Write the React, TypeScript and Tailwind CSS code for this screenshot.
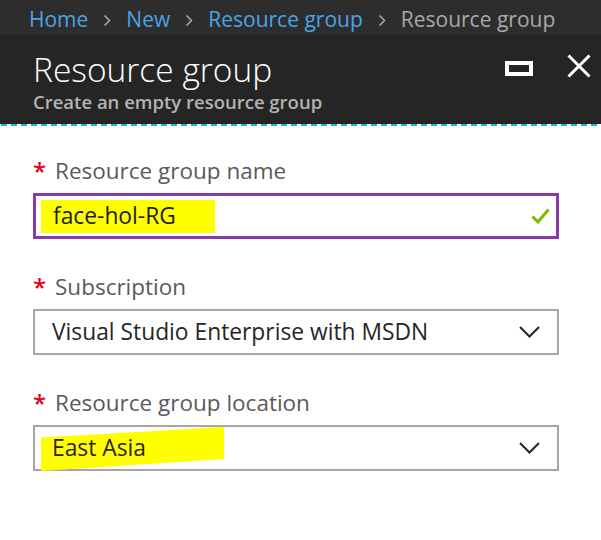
import React from 'react';

const crumbs = ['Home', 'New', 'Resource group'];

const Label: React.FC<{ text: string }> = ({ text }) => (
  <div className="flex items-center h-[28px] text-[22.5px] text-[#5a5a5a]">
    <span className="w-[22px] text-[24px] leading-none text-[#e3001b] font-semibold">*</span>
    <span>{text}</span>
  </div>
);

const Chevron = () => (
  <svg width="21" height="12" viewBox="0 0 21 12" fill="none">
    <path d="M1 1l9.5 9.5L20 1" stroke="#262626" strokeWidth="2" />
  </svg>
);

const Sep = () => (
  <svg width="8" height="13" viewBox="0 0 8 13" fill="none" className="mx-[15px] mt-[2px]">
    <path d="M1.5 1.5l5 5-5 5" stroke="#a8a8a8" strokeWidth="1.5" />
  </svg>
);

const App: React.FC = () => {
  return (
    <div className="w-[601px] h-[540px] bg-white overflow-hidden font-['Open_Sans','Noto_Sans',sans-serif]">
      {/* breadcrumb */}
      <nav className="h-[35px] bg-[#2d2d2d] flex items-center pl-[29px] pt-[3px] text-[21px] leading-none">
        {crumbs.map(c => (
          <React.Fragment key={c}>
            <span className="text-[#4ba3e8]">{c}</span>
            <Sep />
          </React.Fragment>
        ))}
        <span className="text-[#a8a8a8]">Resource group</span>
      </nav>

      {/* blade header */}
      <header className="h-[89px] bg-[#252525] flex justify-between pl-[33px] pr-[10px] pt-[14px]">
        <div>
          <h1 className="text-[33.5px] leading-[40px] font-light text-white">Resource group</h1>
          <p className="text-[18.5px] leading-[22px] font-semibold text-[#b3b3b3] mt-[2px]">Create an empty resource group</p>
        </div>
        <div className="flex items-start gap-[34px]">
          <div className="w-[28px] h-[15px] border-4 border-white mt-[12px]" />
          <svg width="24" height="24" viewBox="0 0 24 24" className="mt-[5px]">
            <path d="M1.5 1.5l21 21M22.5 1.5l-21 21" stroke="white" strokeWidth="3" />
          </svg>
        </div>
      </header>
      <div className="h-[2px] ml-[1px] bg-[repeating-linear-gradient(90deg,#12b5ef_0_6px,transparent_6px_10px)]" />

      {/* form */}
      <form className="pl-[33px] pr-[42px] pt-[31px] flex flex-col gap-[34px]">
        <div className="flex flex-col gap-[8px]">
          <Label text="Resource group name" />
          <div className="h-[46px] border-[3px] border-[#8b39a8] flex items-center pl-[5px] pr-[6px] justify-between">
            <span className="w-[174px] h-[33px] bg-[#ffff00] pl-[12px] flex items-center text-[22.8px] text-[#1e1e1e]">
              face-hol-RG
            </span>
            <svg width="19" height="16" viewBox="0 0 19 16" fill="none">
              <path d="M1.5 8.5l5.5 5.5L17.5 1.5" stroke="#7fba00" strokeWidth="3" />
            </svg>
          </div>
        </div>

        <div className="flex flex-col gap-[8px]">
          <Label text="Subscription" />
          <div className="h-[46px] border-2 border-[#a6a6a6] flex items-center justify-between pl-[17px] pr-[17px] text-[22.8px] text-[#262626]">
            <span>Visual Studio Enterprise with MSDN</span>
            <Chevron />
          </div>
        </div>

        <div className="flex flex-col gap-[8px]">
          <Label text="Resource group location" />
          <div className="relative h-[46px] border-2 border-[#a6a6a6] flex items-center justify-between pl-[17px] pr-[17px] text-[22.8px] text-[#262626]">
            <div className="absolute left-[6px] top-0 w-[183px] h-[44px] bg-[#ffff00] [clip-path:polygon(0_24%,100%_0,100%_73%,0_100%)]" />
            <span className="relative">East Asia</span>
            <Chevron />
          </div>
        </div>
      </form>
    </div>
  );
};

export default App;
